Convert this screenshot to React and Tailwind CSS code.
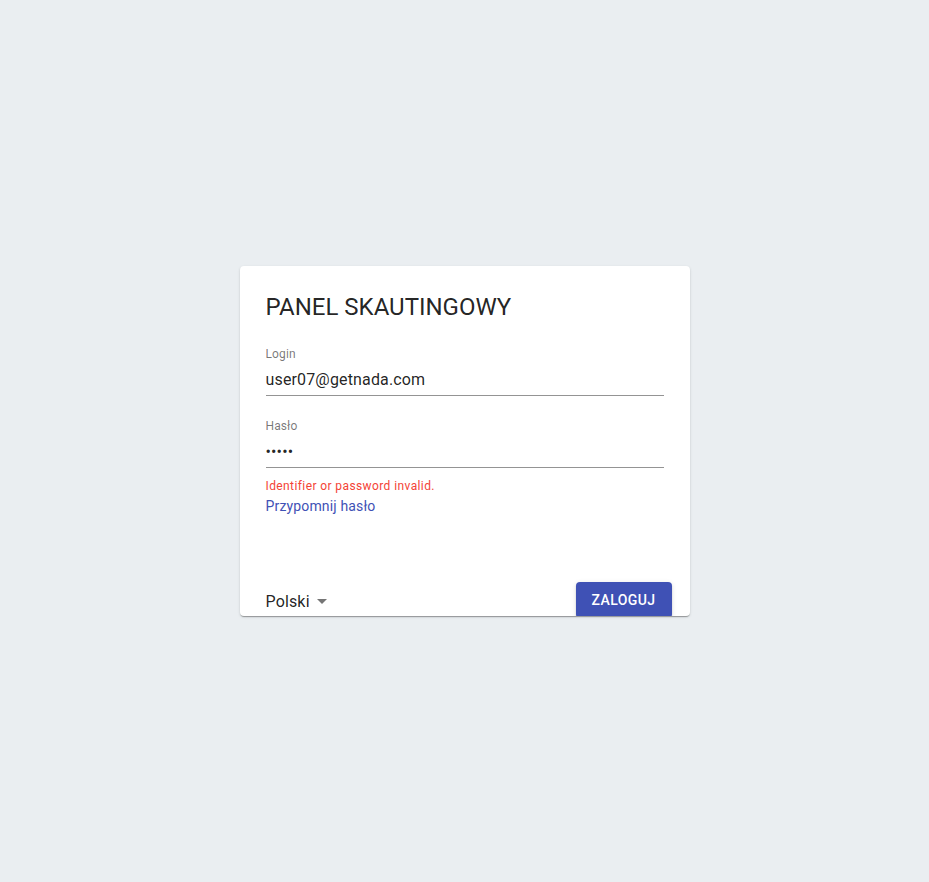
import React from 'react';

const ArrowDropDown = () => (
  <svg viewBox="0 0 24 24" className="w-6 h-6 fill-[rgba(0,0,0,0.54)]">
    <path d="M7 10l5 5 5-5z" />
  </svg>
);

const Field = ({ label, type, value, className = '' }) => (
  <div className={`flex flex-col ${className}`}>
    <label className="text-[12px] leading-[12px] tracking-[0.00938em] text-[rgba(0,0,0,0.54)]">{label}</label>
    <input
      type={type}
      defaultValue={value}
      readOnly
      className="mt-[4px] pt-[6px] pb-[6px] h-[32px] text-[16px] leading-[19px] tracking-[0.00938em] text-[rgba(0,0,0,0.87)] border-b border-[rgba(0,0,0,0.42)] outline-none bg-transparent"
    />
  </div>
);

const App = () => {
  return (
    <div className="h-screen w-full flex items-center justify-center bg-[#eaeef1] font-['Roboto',_'Liberation_Sans',_sans-serif]">
      <div className="w-[450px] h-[350px] bg-white rounded-[4px] overflow-hidden flex flex-col px-[26px] shadow-[0px_2px_1px_-1px_rgba(0,0,0,0.2),0px_1px_1px_0px_rgba(0,0,0,0.14),0px_1px_3px_0px_rgba(0,0,0,0.12)]">
        <h1 className="pt-[25px] text-[24px] leading-[32px] font-normal text-[rgba(0,0,0,0.87)]">
          PANEL SKAUTINGOWY
        </h1>

        <Field label="Login" type="text" value="user07@getnada.com" className="mt-[25px]" />
        <Field label="Hasło" type="password" value="abcde" className="mt-[24px]" />

        <p className="mt-[8px] text-[12px] leading-[20px] tracking-[0.03333em] text-[#f44336]">Identifier or password invalid.</p>
        <a href="#" className="text-[14px] leading-[20px] tracking-[0.01071em] text-[#3f51b5] self-start">
          Przypomnij hasło
        </a>

        {/* stopka: jezyk + przycisk */}
        <div className="mt-auto mb-[-2px] -mr-[8px] flex items-center justify-between">
          <div className="flex items-center pt-[2px] text-[16px] leading-[19px] tracking-[0.00938em] text-[rgba(0,0,0,0.87)]">
            <span>Polski</span>
            <ArrowDropDown />
          </div>
          <button className="w-[96px] h-[36px] rounded-[4px] bg-[#3f51b5] text-white text-[14px] font-medium uppercase tracking-[0.02857em] shadow-[0px_3px_1px_-2px_rgba(0,0,0,0.2),0px_2px_2px_0px_rgba(0,0,0,0.14),0px_1px_5px_0px_rgba(0,0,0,0.12)]">
            Zaloguj
          </button>
        </div>
      </div>
    </div>
  );
};

export default App;
